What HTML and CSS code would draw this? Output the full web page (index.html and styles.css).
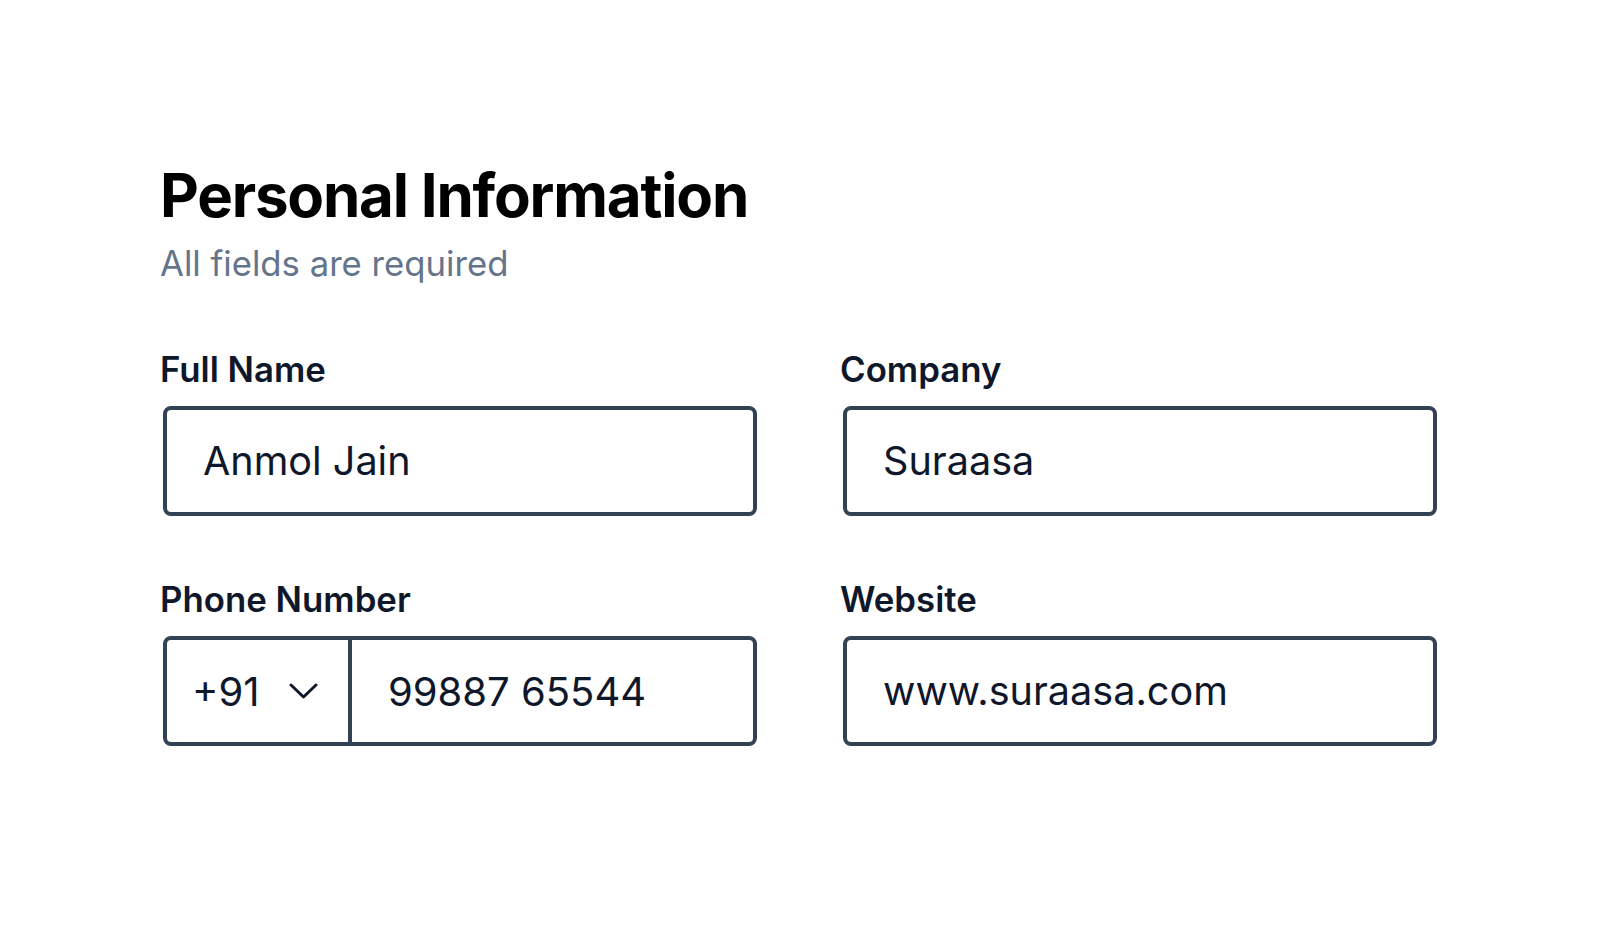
FILE: index.html
```html
<!DOCTYPE html>
<html lang="en">
<head>
<meta charset="utf-8">
<title>Personal Information</title>
<link rel="stylesheet" href="styles.css">
</head>
<body>
<main class="page">
  <header class="intro">
    <h1 class="title">Personal Information</h1>
    <p class="subtitle">All fields are required</p>
  </header>
  <form class="form-grid">
    <div class="field">
      <label class="label" for="name">Full Name</label>
      <div class="box"><input class="input" id="name" type="text" value="Anmol Jain"></div>
    </div>
    <div class="field">
      <label class="label" for="company">Company</label>
      <div class="box"><input class="input" id="company" type="text" value="Suraasa"></div>
    </div>
    <div class="field">
      <label class="label" for="phone">Phone Number</label>
      <div class="box phone">
        <div class="code">
          <span class="code-text">+91</span>
          <svg class="chev" viewBox="0 0 29 16" width="29" height="16" aria-hidden="true"><polyline points="2,2 14.5,14 27,2" fill="none" stroke="#0f172a" stroke-width="3" stroke-linecap="round" stroke-linejoin="round"/></svg>
        </div>
        <input class="input phone-input" id="phone" type="text" value="99887 65544">
      </div>
    </div>
    <div class="field">
      <label class="label" for="web">Website</label>
      <div class="box"><input class="input" id="web" type="text" value="www.suraasa.com"></div>
    </div>
  </form>
</main>
</body>
</html>
```

FILE: styles.css
```css
* { box-sizing: border-box; }
html, body { margin: 0; padding: 0; background: #ffffff; }
body { font-family: "Inter", "Noto Sans", sans-serif; color: #0f172a; }

.page {
  padding: 165px 163px 0 160px;
  width: 1600px;
}

.intro { margin-bottom: 64px; }

.title {
  margin: 0;
  font-size: 60px;
  line-height: 60px;
  font-weight: 700;
  letter-spacing: -0.02em;
  color: #000000;
}

.subtitle {
  margin: 16px 0 0 0;
  font-size: 34.7px;
  line-height: 44px;
  font-weight: 400;
  color: #64748b;
}

.form-grid {
  display: grid;
  grid-template-columns: 597px 597px;
  column-gap: 83px;
  row-gap: 63px;
}

.field { display: flex; flex-direction: column; gap: 17px; }

.label {
  font-size: 34.8px;
  line-height: 40px;
  font-weight: 600;
  color: #0f172a;
}

.box {
  display: flex;
  align-items: center;
  height: 110px;
  margin-left: 3px;
  border: 4px solid #334155;
  border-radius: 8px;
  background: #fff;
}

.input {
  flex: 1;
  min-width: 0;
  height: 100%;
  border: 0;
  outline: none;
  background: transparent;
  padding: 0 0 0 36px;
  font-family: "Inter", "Noto Sans", sans-serif;
  font-size: 39.6px;
  color: #0f172a;
}

.code {
  display: flex;
  align-items: center;
  gap: 29px;
  height: 100%;
  width: 185px;
  padding-left: 25px;
  border-right: 4px solid #334155;
  font-size: 40px;
  color: #0f172a;
}

.chev { display: block; }

.phone-input { padding-left: 36px; font-size: 40px; }
```
